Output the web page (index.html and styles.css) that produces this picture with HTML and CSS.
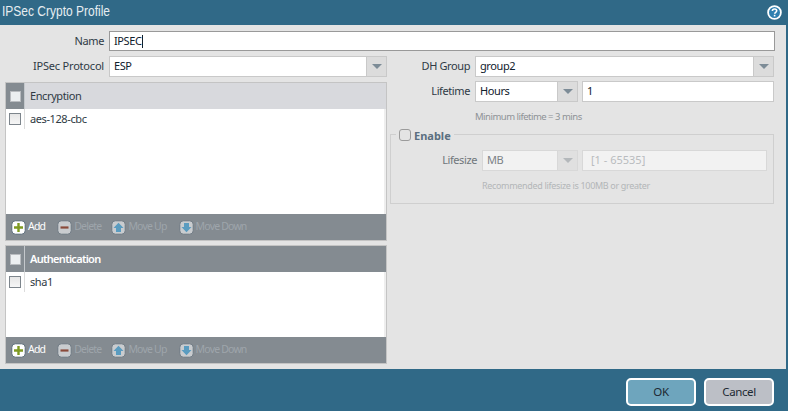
FILE: index.html
```html
<!DOCTYPE html>
<html>
<head>
<meta charset="utf-8">
<title>IPSec Crypto Profile</title>
<link rel="stylesheet" href="styles.css">
</head>
<body>
<div class="dialog">
  <header class="titlebar">
    <span class="title">IPSec Crypto Profile</span>
    <svg class="help" width="15" height="15" viewBox="0 0 15 15"><circle cx="7.5" cy="7.5" r="6.4" fill="#2f7fb0" stroke="#fff" stroke-width="1.8"/><path d="M5.4 6c0-1.3 1-2 2.2-2s2.1.7 2.1 1.8c0 1.500-2 1.500-2 3" fill="none" stroke="#fff" stroke-width="1.600"/><rect x="6.8" y="9.800" width="1.600" height="1.600" fill="#fff"/></svg>
  </header>
  <main class="content">
    <div class="row name-row">
      <label class="lbl lbl-left">Name</label>
      <div class="input name-input"><span class="val-fit">IPSEC</span><span class="caret"></span></div>
    </div>
    <div class="columns">
      <section class="left">
        <div class="row proto-row">
          <label class="lbl lbl-left lbl-proto">IPSec Protocol</label>
          <div class="select grow"><span class="val">ESP</span><span class="arrow"><i></i></span></div>
        </div>
        <div class="grid grid-enc">
          <div class="ghead light"><span class="hcheck"><b class="cb"></b></span><span class="htext">Encryption</span></div>
          <div class="gbody"><div class="grow-row"><span class="rcheck"><b class="cb"></b></span><span class="rtext">aes-128-cbc</span></div></div>
          <div class="toolbar">
            <span class="tool on t-add"><svg class="ti" width="15" height="15" viewBox="0 0 15 15"><rect x=".8" y=".8" width="13.400" height="13.400" rx="3.500" fill="#fff" stroke="#5b6b78"/><path d="M7.500 3v9M3 7.500h9" stroke="#7f9a22" stroke-width="2.400"/></svg><span class="tl">Add</span></span>
            <span class="tool t-del"><svg class="ti" width="15" height="15" viewBox="0 0 15 15"><rect x=".8" y=".8" width="13.400" height="13.400" rx="3.500" fill="#c9cccf" stroke="#6f7a83"/><path d="M3.500 7.500h8" stroke="#8a4a3a" stroke-width="2.200"/></svg><span class="tl">Delete</span></span>
            <span class="tool t-up"><svg class="ti" width="15" height="15" viewBox="0 0 15 15"><rect x=".8" y=".8" width="13.400" height="13.400" rx="3.500" fill="#c9cccf" stroke="#6f7a83"/><path d="M7.500 2.800 12.500 8H10v4H5V8H2.500z" fill="#5a9cc0"/></svg><span class="tl">Move Up</span></span>
            <span class="tool"><svg class="ti" width="15" height="15" viewBox="0 0 15 15"><rect x=".8" y=".8" width="13.400" height="13.400" rx="3.500" fill="#c9cccf" stroke="#6f7a83"/><path d="M7.500 12.200 12.500 7H10V3H5v4H2.500z" fill="#5a9cc0"/></svg><span class="tl">Move Down</span></span>
          </div>
        </div>
        <div class="grid grid-auth">
          <div class="ghead dark"><span class="hcheck"><b class="cb"></b></span><span class="htext">Authentication</span></div>
          <div class="gbody"><div class="grow-row"><span class="rcheck"><b class="cb"></b></span><span class="rtext">sha1</span></div></div>
          <div class="toolbar">
            <span class="tool on t-add"><svg class="ti" width="15" height="15" viewBox="0 0 15 15"><rect x=".8" y=".8" width="13.400" height="13.400" rx="3.500" fill="#fff" stroke="#5b6b78"/><path d="M7.500 3v9M3 7.500h9" stroke="#7f9a22" stroke-width="2.400"/></svg><span class="tl">Add</span></span>
            <span class="tool t-del"><svg class="ti" width="15" height="15" viewBox="0 0 15 15"><rect x=".8" y=".8" width="13.400" height="13.400" rx="3.500" fill="#c9cccf" stroke="#6f7a83"/><path d="M3.500 7.500h8" stroke="#8a4a3a" stroke-width="2.200"/></svg><span class="tl">Delete</span></span>
            <span class="tool t-up"><svg class="ti" width="15" height="15" viewBox="0 0 15 15"><rect x=".8" y=".8" width="13.400" height="13.400" rx="3.500" fill="#c9cccf" stroke="#6f7a83"/><path d="M7.500 2.800 12.500 8H10v4H5V8H2.500z" fill="#5a9cc0"/></svg><span class="tl">Move Up</span></span>
            <span class="tool"><svg class="ti" width="15" height="15" viewBox="0 0 15 15"><rect x=".8" y=".8" width="13.400" height="13.400" rx="3.500" fill="#c9cccf" stroke="#6f7a83"/><path d="M7.500 12.200 12.500 7H10V3H5v4H2.500z" fill="#5a9cc0"/></svg><span class="tl">Move Down</span></span>
          </div>
        </div>
      </section>
      <section class="right">
        <div class="row">
          <label class="lbl lbl-right">DH Group</label>
          <div class="select grow"><span class="val">group2</span><span class="arrow"><i></i></span></div>
        </div>
        <div class="row life-row">
          <label class="lbl lbl-right">Lifetime</label>
          <div class="select unit"><span class="val">Hours</span><span class="arrow"><i></i></span></div>
          <div class="input grow"><span class="val-fit">1</span></div>
        </div>
        <div class="hint hint-min">Minimum lifetime = 3 mins</div>
        <div class="fieldset">
          <div class="legend"><b class="cb round"></b><span>Enable</span></div>
          <div class="row size-row">
            <label class="lbl lbl-size">Lifesize</label>
            <div class="select unit-size off"><span class="val">MB</span><span class="arrow"><i></i></span></div>
            <div class="input grow off placeholder"><span class="val-fit">[1 - 65535]</span></div>
          </div>
          <div class="hint hint-size">Recommended lifesize is 100MB or greater</div>
        </div>
      </section>
    </div>
  </main>
  <footer class="footer">
    <button class="btn ok">OK</button>
    <button class="btn cancel">Cancel</button>
  </footer>
</div>
</body>
</html>
```
FILE: styles.css
```css
* { box-sizing: border-box; }
html, body { margin: 0; padding: 0; }
body { width: 788px; height: 411px; overflow: hidden; background: #306987; font-family: "Noto Sans", sans-serif; font-size: 11px; letter-spacing: -.4px; color: #27323c; }
.dialog { width: 788px; height: 411px; display: flex; flex-direction: column; }
.titlebar { height: 25px; flex: none; display: flex; align-items: center; justify-content: space-between; padding: 0 6px 0 2px; background: #306987; }
.title { font-family: "Liberation Sans", sans-serif; font-size: 15px; letter-spacing: 0; color: #e6edf1; transform: scaleX(.8); transform-origin: left center; margin-bottom: 5px; }
.help { display: block; margin-bottom: 1px; }
.content { height: 344px; flex: none; width: 786px; background: #e4e4e4; padding: 6px 0 0 0; }
.row { display: flex; align-items: center; }
.name-row { height: 20px; padding-right: 11px; }
.lbl { flex: none; text-align: right; color: #2f3a44; margin-bottom: 2px; }
.lbl-left { width: 104px; margin-right: 5px; }
.lbl-proto { letter-spacing: -.2px; }
.lbl-right { width: 80px; margin-right: 5px; }
.input, .select { height: 21px; background: #fff; border: 1px solid #c9c9c9; display: flex; align-items: center; color: #10202c; }
.input { padding-left: 4px; }
.name-input { flex: 1; height: 20px; border-color: #999; }
.caret { width: 1px; height: 13px; background: #10202c; }
.val-fit { margin-bottom: 2px; }
.grow { flex: 1; }
.select { padding-left: 4px; }
.val { flex: 1; margin-bottom: 2px; }
.arrow { flex: none; width: 20px; height: 100%; background: #dcdcdc; border-left: 1px solid #c9c9c9; display: flex; align-items: center; justify-content: center; }
.arrow i { display: block; width: 0; height: 0; border: 5px solid transparent; border-bottom-width: 0; border-top: 5px solid #7d8c97; }
.columns { display: flex; margin-top: 5px; }
.left { width: 387px; flex: none; padding-left: 5px; }
.proto-row { height: 21px; margin-left: -5px; }
.right { width: 388px; flex: none; margin-left: 3px; padding-right: 4px; }
.grid { width: 382px; border: 1px solid #c4c4c4; background: #fff; display: flex; flex-direction: column; }
.grid-enc { height: 159px; margin-top: 5px; }
.grid-auth { height: 119px; margin-top: 4px; }
.ghead { height: 26px; flex: none; display: flex; align-items: stretch; }
.ghead.light { background: #d8d9dd; }
.ghead.dark { background: #848b91; color: #fff; }
.hcheck { width: 19px; background: #848b91; border-right: 1px solid #c4c8cc; display: flex; align-items: center; justify-content: center; flex: none; }
.htext { padding-left: 5px; align-self: center; margin-bottom: 2px; }
.light .htext { color: #2f3a44; }
.dark .htext { font-weight: 600; letter-spacing: -.7px; }
.gbody { flex: 1; background: #fff; border-right: 2px solid #eee; }
.grow-row { display: flex; height: 20px; align-items: center; }
.rcheck { width: 19px; height: 20px; border-right: 1px solid #dcdcdc; display: flex; align-items: center; justify-content: center; flex: none; }
.rtext { padding-left: 5px; color: #2f3a44; margin-bottom: 2px; }
.cb { display: block; width: 12px; height: 12px; background: linear-gradient(#e6e6e6, #f6f6f6); border: 1px solid #7d858c; }
.hcheck .cb { border-color: #b9bcc0; background: #eceff1; width: 11px; height: 11px; }
.toolbar { height: 26px; flex: none; background: #848b91; display: flex; align-items: center; padding-left: 5px; color: #9ea5ab; font-size: 10.500px; letter-spacing: -.8px; }
.tool { display: flex; align-items: center; gap: 2px; }
.t-add { margin-right: 12px; }
.t-del { margin-right: 10px; }
.t-up { margin-right: 12px; }
.tool.on { color: #fff; }
.tl { margin-bottom: 2px; }
.ti { display: block; flex: none; }
.life-row { margin-top: 4px; }
.unit { width: 103px; flex: none; margin-right: 4px; }
.hint { font-size: 9.500px; letter-spacing: -.5px; color: #8e9296; }
.hint-min { margin: 9px 0 0 85px; height: 12px; line-height: 12px; }
.fieldset { position: relative; margin-top: 11px; height: 70px; border: 1px solid #cfcfcf; padding: 15px 6px 0 0; }
.legend { position: absolute; top: -10px; left: 5px; display: flex; align-items: center; gap: 3px; padding: 0 3px; background: #e4e4e4; height: 20px; font-weight: 700; letter-spacing: 0; color: #5b6f80; }
.cb.round { border-radius: 3px; background: #e4e4e4; border-color: #9b9b9b; }
.lbl-size { width: 86px; margin-right: 5px; color: #70767b; }
.off { background: #f2f2f2; border-color: #d8d8d8; }
.off .arrow { background: #e0e0e0; border-color: #d8d8d8; }
.off .arrow i { border-top-color: #b4b8bb; }
.unit-size { width: 96px; flex: none; margin-right: 4px; color: #7c8287; }
.placeholder { color: #b9bcbf; padding-left: 8px; letter-spacing: 0; }
.hint-size { margin: 8px 0 0 91px; font-size: 9px; letter-spacing: -.33px; color: #b3b6b8; }
.footer { flex: 1; display: flex; justify-content: flex-end; align-items: center; gap: 8px; padding: 3px 14px 0 0; background: #306987; }
.btn { width: 70px; height: 28px; border: 2px solid #fff; border-radius: 5px; font: inherit; letter-spacing: -.4px; font-size: 11.500px; color: #1d2933; padding: 0; }
.ok { background: #6ea5bd; }
.cancel { background: #bcbfc6; }
```
